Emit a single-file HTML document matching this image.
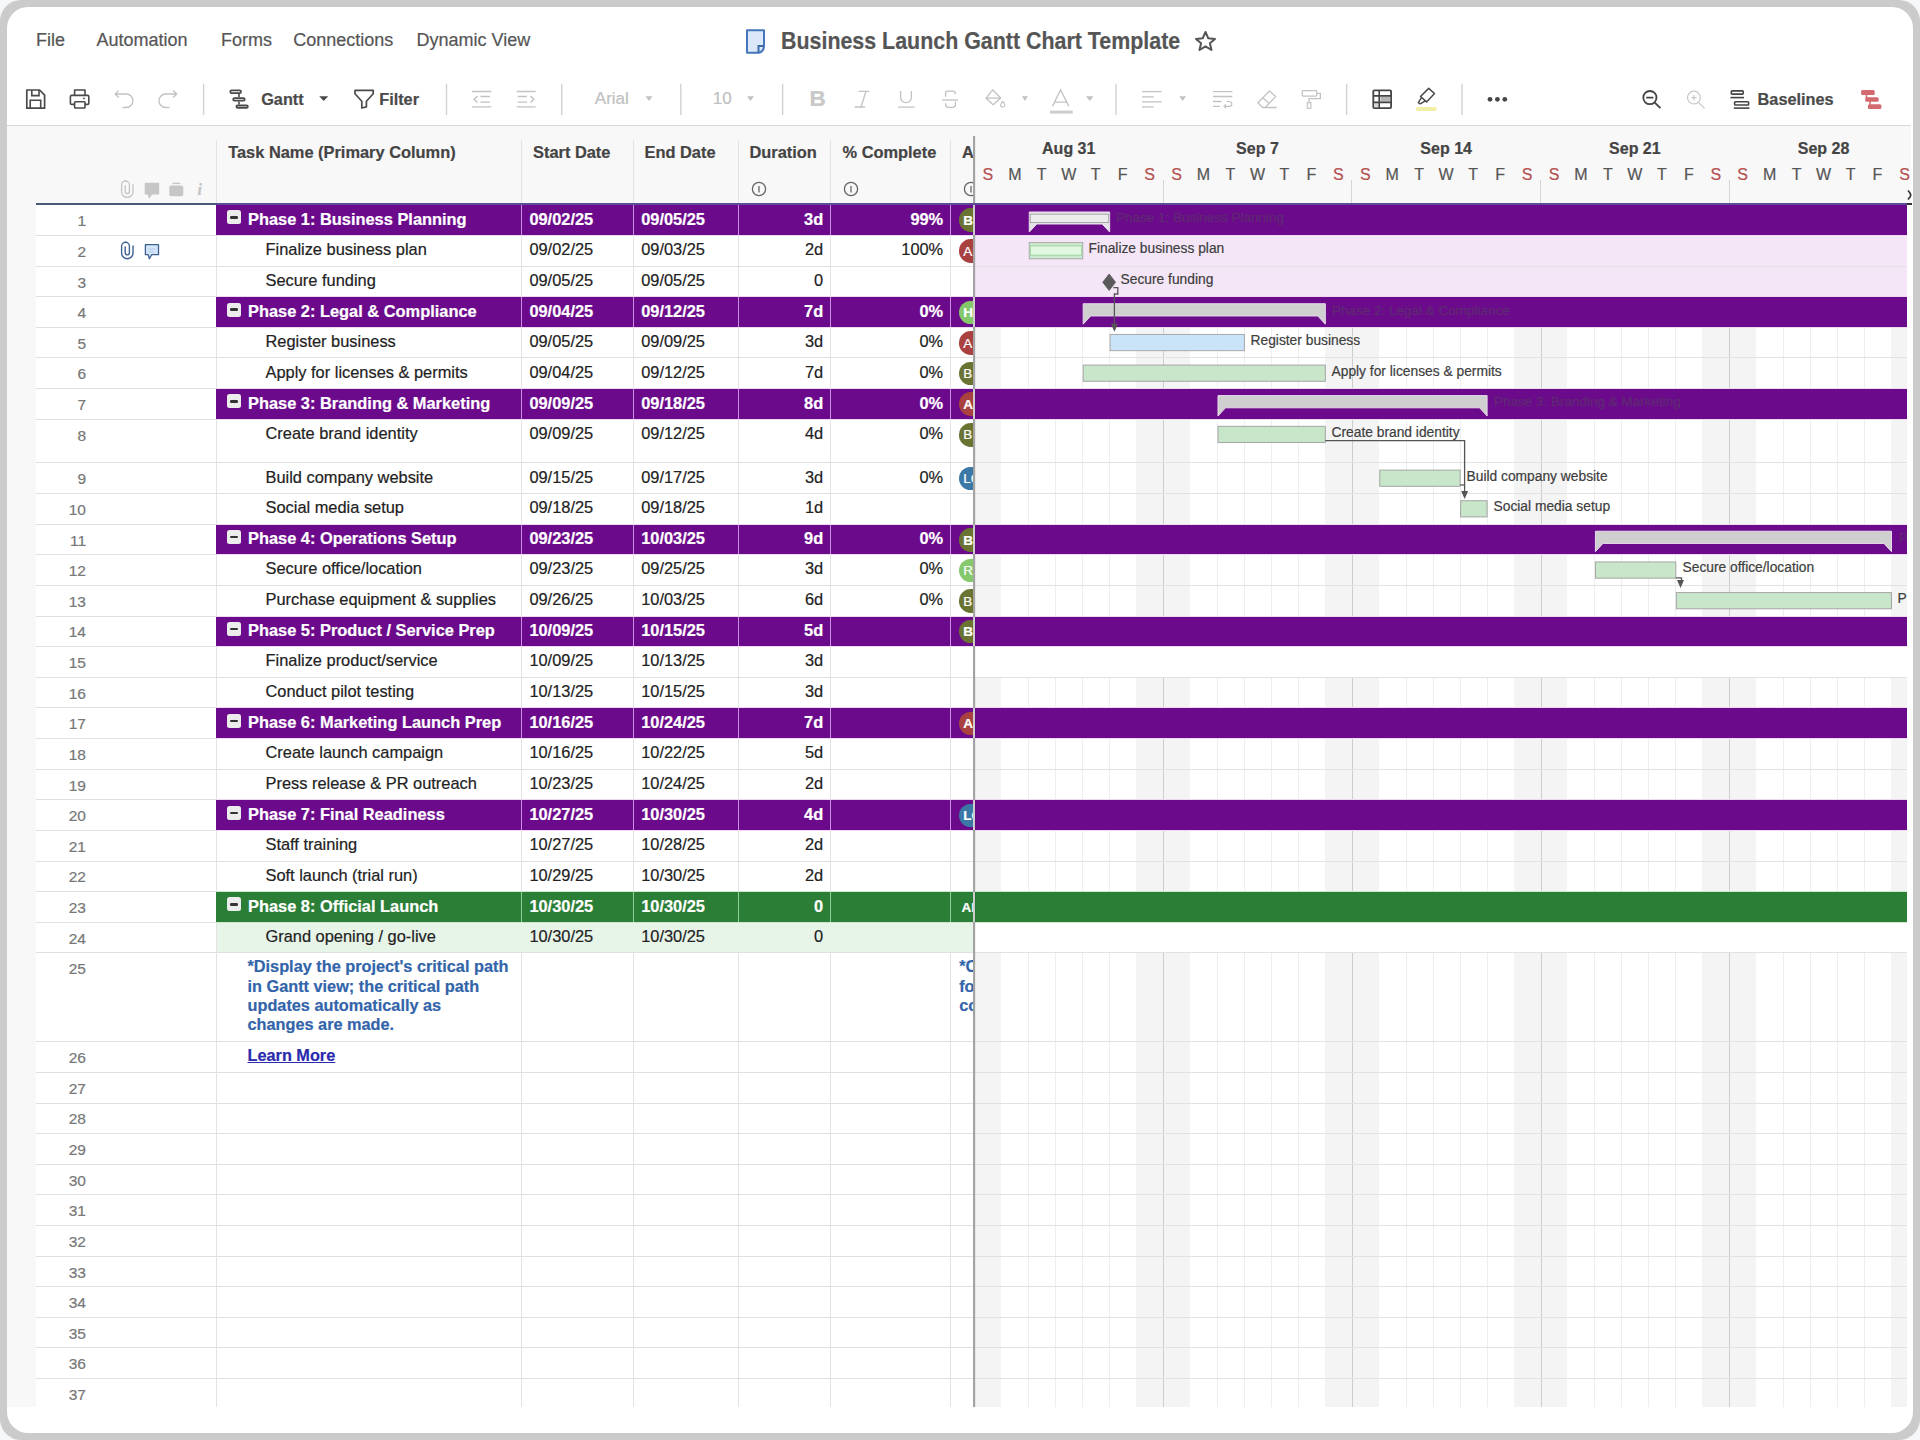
<!DOCTYPE html>
<html><head><meta charset="utf-8"><style>
.t{-webkit-text-stroke:0.2px currentColor}
html,body{margin:0;padding:0;width:1920px;height:1440px;overflow:hidden;background:#f6f7f9}
body div{position:absolute}
.t{white-space:nowrap;font-family:"Liberation Sans",sans-serif}
body{font-family:"Liberation Sans",sans-serif}
</style></head><body>
<div style="left:0;top:0;width:1920px;height:1440px;border-radius:21px;background:#cbcbcb"></div>
<div style="left:7px;top:7px;width:1906px;height:1426px;border-radius:21px;background:#fff"></div>
<div class="t" style="left:36.00px;top:30.76px;font-size:18px;line-height:18px;font-weight:400;color:#555;">File</div>
<div class="t" style="left:96.50px;top:30.76px;font-size:18px;line-height:18px;font-weight:400;color:#555;">Automation</div>
<div class="t" style="left:221.00px;top:30.76px;font-size:18px;line-height:18px;font-weight:400;color:#555;">Forms</div>
<div class="t" style="left:293.30px;top:30.76px;font-size:18px;line-height:18px;font-weight:400;color:#555;">Connections</div>
<div class="t" style="left:416.50px;top:30.76px;font-size:18px;line-height:18px;font-weight:400;color:#555;">Dynamic View</div>
<svg style="position:absolute;left:744.00px;top:28.00px;" width="24" height="27" viewBox="0 0 24 27"><path d="M3 2.3 H20 V17.5 Q20 23.8 14.5 24.8 H3 Z" fill="#dbe8fa" stroke="#4677bb" stroke-width="2" stroke-linejoin="round"/><path d="M19.8 18 H14.5 V24.5" fill="none" stroke="#3f6aa8" stroke-width="2"/></svg>
<div class="t" style="left:781.00px;top:29.69px;font-size:23.4px;line-height:23.4px;font-weight:700;color:#555;transform:scaleX(0.915);transform-origin:0 0">Business Launch Gantt Chart Template</div>
<svg style="position:absolute;left:1193.00px;top:29.00px;" width="25" height="25" viewBox="0 0 25 25"><path d="M12.5 3 L15.3 9.3 L22 9.9 L16.9 14.3 L18.5 21 L12.5 17.4 L6.5 21 L8.1 14.3 L3 9.9 L9.7 9.3 Z" fill="none" stroke="#555" stroke-width="2" stroke-linejoin="round"/></svg>
<svg style="position:absolute;left:0;top:0" width="1920" height="130"><path d="M26.8 90 H39.6 L44.6 95.2 V108.2 H26.8 Z" fill="none" stroke="#4a4a4a" stroke-width="1.7" stroke-linejoin="round"/><path d="M31.8 90 V95.6 H39 V90" fill="none" stroke="#4a4a4a" stroke-width="1.6"/><path d="M30.2 108.2 V100.2 H40.7 V108.2" fill="none" stroke="#4a4a4a" stroke-width="1.6"/><path d="M74.6 95 V90 H85 V95" fill="none" stroke="#4a4a4a" stroke-width="1.6" stroke-linejoin="round"/><rect x="70.4" y="95.4" width="18.4" height="9" rx="1.2" fill="none" stroke="#4a4a4a" stroke-width="1.6"/><rect x="74.6" y="101.8" width="10.4" height="6.2" rx="0.8" fill="#fff" stroke="#4a4a4a" stroke-width="1.6"/><circle cx="84" cy="98.4" r="0.9" fill="#4a4a4a"/><path d="M115.2 94 H126.2 A6.75 6.75 0 0 1 126.2 107.5 H122.5 M118.75 90.4 L115.2 94 L118.75 97.5" fill="none" stroke="#c2c2c2" stroke-width="1.3"/><path d="M176.7 94 H165.7 A6.75 6.75 0 0 0 165.7 107.5 H169.4 M173.15 90.4 L176.7 94 L173.15 97.5" fill="none" stroke="#c2c2c2" stroke-width="1.3"/><rect x="202.9" y="83.7" width="1.4" height="31.3" fill="#d2d2d2"/><rect x="445.8" y="83.7" width="1.4" height="31.3" fill="#d2d2d2"/><rect x="561.0" y="83.7" width="1.4" height="31.3" fill="#d2d2d2"/><rect x="680.0999999999999" y="83.7" width="1.4" height="31.3" fill="#d2d2d2"/><rect x="781.9" y="83.7" width="1.4" height="31.3" fill="#d2d2d2"/><rect x="1115.3" y="83.7" width="1.4" height="31.3" fill="#d2d2d2"/><rect x="1345.8999999999999" y="83.7" width="1.4" height="31.3" fill="#d2d2d2"/><rect x="1461.3" y="83.7" width="1.4" height="31.3" fill="#d2d2d2"/><rect x="230.3" y="90.30000000000001" width="10.7" height="2.7999999999999945" rx="1.3" fill="none" stroke="#4a4a4a" stroke-width="1.8"/><rect x="233.20000000000002" y="98.2" width="11.499999999999982" height="2.400000000000003" rx="1.3" fill="none" stroke="#4a4a4a" stroke-width="1.8"/><rect x="236.4" y="105.5" width="11.45" height="2.350000000000006" rx="1.3" fill="none" stroke="#4a4a4a" stroke-width="1.8"/><path d="M239 94 V97.3 M239 101.5 V104.6" stroke="#4a4a4a" stroke-width="1.6"/><path d="M319.2 96.3 H328.2 L323.7 101 Z" fill="#4a4a4a"/><path d="M355 90.3 H373.2 V93.8 L366.4 101.3 V106.9 L361.8 108 V101.3 L355 93.8 Z" fill="none" stroke="#4a4a4a" stroke-width="1.7" stroke-linejoin="round"/><path d="M472 91.5 H491.3 M480.4 96.5 H490 M480.4 102.1 H490 M472 106.9 H491.3" stroke="#c2c2c2" stroke-width="1.4"/><path d="M477.5 96 L474 99.3 L477.5 102.6" fill="none" stroke="#c2c2c2" stroke-width="1.4"/><path d="M516.7 91.5 H535.6 M517.7 96.5 H526.9 M517.7 102.1 H526.9 M516.7 106.9 H535.6" stroke="#c2c2c2" stroke-width="1.4"/><path d="M530.6 96 L533.8 99.3 L530.6 102.6" fill="none" stroke="#c2c2c2" stroke-width="1.4"/><path d="M645.5 96.3 H652.5 L649.0 101 Z" fill="#c2c2c2"/><path d="M747 96.3 H754 L750.5 101 Z" fill="#c2c2c2"/><path d="M858.8 91.3 H869.2 M854.6 107 H865 M866 91.3 L861 107" fill="none" stroke="#c2c2c2" stroke-width="1.3"/><path d="M900.6 91 V97.3 A5.4 5.4 0 0 0 911.4 97.3 V91 M898 107.2 H914.6" fill="none" stroke="#c2c2c2" stroke-width="1.3"/><path d="M955.2 94.3 V93.5 Q955.2 91.2 952.5 91.2 H948 Q945.5 91.2 945.5 93.8 V96.8 M945.6 103.3 V104.6 Q945.6 107.3 948.3 107.3 H952.8 Q955.5 107.3 955.5 104.6 V101.5" fill="none" stroke="#c2c2c2" stroke-width="1.3"/><path d="M942 100 H958" stroke="#c2c2c2" stroke-width="1.3"/><path d="M992.6 89.8 L1000.7 98 L993.2 104.8 L986 98.3 Z" fill="none" stroke="#c2c2c2" stroke-width="1.3" stroke-linejoin="round"/><path d="M986.5 98.1 H1000.3" stroke="#c2c2c2" stroke-width="1.3"/><path d="M1002.7 101.3 Q1000.6 104 1000.6 105 A2.1 2.1 0 0 0 1004.8 105 Q1004.8 104 1002.7 101.3 Z" fill="none" stroke="#c2c2c2" stroke-width="1.1"/><path d="M1021.9 96.3 H1028 L1024.95 101 Z" fill="#c2c2c2"/><path d="M1052.5 106.4 L1060.6 89.8 L1068.8 106.4 M1055 102.2 H1066.3" fill="none" stroke="#c2c2c2" stroke-width="1.3"/><rect x="1050" y="110.6" width="22.7" height="3" fill="#cdcdcd"/><path d="M1086 96.3 H1093.5 L1089.75 101 Z" fill="#c2c2c2"/><path d="M1142 91.6 H1161.6 M1142 96.8 H1153.8 M1142 101.8 H1161.6 M1142 106.8 H1153.8" stroke="#c2c2c2" stroke-width="1.3"/><path d="M1179.3 96.3 H1186 L1182.65 101 Z" fill="#c2c2c2"/><path d="M1213 91.6 H1232.4 M1213 96.5 H1232.4 M1213 101.5 H1221.5 M1213 106.3 H1220" stroke="#c2c2c2" stroke-width="1.3"/><path d="M1226.7 101.5 H1229.4 A2.4 2.4 0 0 1 1229.4 106.3 H1224.2 M1226 104.3 L1224 106.3 L1226 108.3" fill="none" stroke="#c2c2c2" stroke-width="1.2"/><path d="M1258 102.8 L1269.4 90.9 L1275.6 96.6 L1265.2 107.5 H1262.5 Z M1262.8 97.8 L1269.3 103.8 M1265.2 107.5 H1276.7" fill="none" stroke="#c2c2c2" stroke-width="1.3" stroke-linejoin="round"/><rect x="1302.3" y="90.7" width="14.4" height="5.4" rx="0.8" fill="none" stroke="#c2c2c2" stroke-width="1.3"/><path d="M1316.7 93.3 H1320.3 V98.7 H1309 V102.3" fill="none" stroke="#c2c2c2" stroke-width="1.3"/><rect x="1307.3" y="102.6" width="3.6" height="5.8" rx="0.5" fill="none" stroke="#c2c2c2" stroke-width="1.2"/><rect x="1373.3" y="90.3" width="17.8" height="17.8" rx="1" fill="none" stroke="#444" stroke-width="1.8"/><rect x="1380.4" y="96.6" width="9.8" height="5" fill="#b4b4b4"/><rect x="1374.3" y="103" width="4" height="4.2" fill="#d8d8d8"/><path d="M1373.3 95.9 H1391.1 M1373.3 102.4 H1391.1 M1379.2 90.3 V108.1" stroke="#444" stroke-width="1.6"/><path d="M1420.5 96.5 L1428.7 88.4 L1434.5 93.5 L1426.6 101.9 Z" fill="none" stroke="#4a4a4a" stroke-width="1.5" stroke-linejoin="round"/><path d="M1421.5 97.6 L1418.3 102.6 L1420.2 103.9 L1425.4 100.8" fill="none" stroke="#4a4a4a" stroke-width="1.4" stroke-linejoin="round"/><rect x="1415.8" y="107" width="21.1" height="3.9" rx="1.9" fill="#f4efa6"/><circle cx="1490" cy="99.3" r="2.4" fill="#454545"/><circle cx="1497.4" cy="99.3" r="2.4" fill="#454545"/><circle cx="1504.8" cy="99.3" r="2.4" fill="#454545"/><circle cx="1649.9" cy="97.6" r="6.6" fill="none" stroke="#444" stroke-width="1.8"/><path d="M1654.8 102.6 L1660.4 108.2 M1646.2 97.6 H1653.4" stroke="#444" stroke-width="1.8"/><circle cx="1693.9" cy="97.6" r="6.4" fill="none" stroke="#c6c6c6" stroke-width="1.2"/><path d="M1698.5 102.4 L1704.6 108.4 M1691.3 97.6 H1696.5 M1693.9 95 V100.2" stroke="#c6c6c6" stroke-width="1.2"/><rect x="1731.3" y="90.9" width="11.9" height="3.2" rx="0.8" fill="none" stroke="#444" stroke-width="1.6"/><path d="M1730.5 97.6 H1744" stroke="#444" stroke-width="1.6"/><rect x="1734.6" y="101.8" width="14" height="3.2" rx="0.8" fill="none" stroke="#444" stroke-width="1.6"/><path d="M1733.8 108.1 H1749.4" stroke="#444" stroke-width="1.6"/><rect x="1861.1" y="90.1" width="13.6" height="4.8" rx="1.5" fill="#d26a70"/><rect x="1865.2" y="97.3" width="13.5" height="4.5" rx="1.5" fill="#d26a70"/><rect x="1867.9" y="104.3" width="13.5" height="4.7" rx="1.5" fill="#d26a70"/><path d="M1866.5 94 V98 M1870 101 V105" stroke="#d26a70" stroke-width="1.5"/></svg>
<div class="t" style="left:261.20px;top:90.90px;font-size:16.3px;line-height:16.3px;font-weight:700;color:#4a4a4a;">Gantt</div>
<div class="t" style="left:379.20px;top:90.90px;font-size:16.3px;line-height:16.3px;font-weight:700;color:#4a4a4a;">Filter</div>
<div class="t" style="left:594.80px;top:90.11px;font-size:17px;line-height:17px;font-weight:400;color:#c0c0c0;">Arial</div>
<div class="t" style="left:712.80px;top:90.11px;font-size:17px;line-height:17px;font-weight:400;color:#c0c0c0;">10</div>
<div class="t" style="left:809.50px;top:88.35px;font-size:22.5px;line-height:22.5px;font-weight:700;color:#c8c8c8;">B</div>
<div class="t" style="left:1757.60px;top:90.70px;font-size:16.3px;line-height:16.3px;font-weight:700;color:#4a4a4a;">Baselines</div>
<div style="left:7.00px;top:124.50px;width:1904.00px;height:1.60px;background:#d9d9d9"></div>
<div style="left:7.00px;top:126.00px;width:1904.00px;height:77.00px;background:#f9f8f8"></div>
<div style="left:7.00px;top:126.00px;width:29.00px;height:1281.00px;background:#f9f8f8"></div>
<svg style="position:absolute;left:0;top:0" width="300" height="270"><path transform="translate(0,-61.3)" d="M125.2 246.5 V252.8 A2.1 2.1 0 0 0 129.4 252.8 V246.2 A3.9 3.9 0 0 0 121.6 246.2 V253 A5.7 5.7 0 0 0 133 253 V245.5" fill="none" stroke="#c4c4c4" stroke-width="1.3"/><path d="M145.3 183.4 H158.6 V194 H151.6 L149.4 197.8 L148.1 194 H145.3 Z" fill="#c6c6c6" stroke="#c6c6c6" stroke-width="1.2" stroke-linejoin="round"/><rect x="169.3" y="185.5" width="14" height="10.8" rx="1.8" fill="#c6c6c6"/><path d="M172.5 183.4 H180.2" stroke="#c6c6c6" stroke-width="1.4"/></svg>
<div class="t" style="left:197.50px;top:182.46px;font-size:16px;line-height:16px;font-weight:700;color:#c4c4c4;font-style:italic;font-family:'Liberation Serif',serif">i</div>
<div style="left:215.50px;top:140.00px;width:1.00px;height:63.00px;background:#e3e3e3"></div>
<div style="left:520.90px;top:140.00px;width:1.00px;height:63.00px;background:#e3e3e3"></div>
<div style="left:632.80px;top:140.00px;width:1.00px;height:63.00px;background:#e3e3e3"></div>
<div style="left:738.30px;top:140.00px;width:1.00px;height:63.00px;background:#e3e3e3"></div>
<div style="left:829.70px;top:140.00px;width:1.00px;height:63.00px;background:#e3e3e3"></div>
<div style="left:950.00px;top:140.00px;width:1.00px;height:63.00px;background:#e3e3e3"></div>
<div class="t" style="left:228.20px;top:144.12px;font-size:16.4px;line-height:16.4px;font-weight:700;color:#444;">Task Name (Primary Column)</div>
<div class="t" style="left:533.00px;top:144.12px;font-size:16.4px;line-height:16.4px;font-weight:700;color:#444;">Start Date</div>
<div class="t" style="left:644.50px;top:144.12px;font-size:16.4px;line-height:16.4px;font-weight:700;color:#444;">End Date</div>
<div class="t" style="left:749.50px;top:144.12px;font-size:16.4px;line-height:16.4px;font-weight:700;color:#444;">Duration</div>
<div class="t" style="left:842.50px;top:144.12px;font-size:16.4px;line-height:16.4px;font-weight:700;color:#444;">% Complete</div>
<div class="t" style="left:962.00px;top:144.12px;font-size:16.4px;line-height:16.4px;font-weight:700;color:#444;">A</div>
<div style="left:740px;top:170px;width:233px;height:30px;overflow:hidden">
<svg style="position:absolute;left:11.00px;top:11.20px;" width="16" height="16" viewBox="0 0 16 16"><circle cx="8" cy="8" r="6.6" fill="none" stroke="#666" stroke-width="1.3"/><path d="M8 5 V11.5" stroke="#666" stroke-width="1.3"/></svg>
<svg style="position:absolute;left:103.00px;top:11.20px;" width="16" height="16" viewBox="0 0 16 16"><circle cx="8" cy="8" r="6.6" fill="none" stroke="#666" stroke-width="1.3"/><path d="M8 5 V11.5" stroke="#666" stroke-width="1.3"/></svg>
<svg style="position:absolute;left:223.00px;top:11.20px;" width="16" height="16" viewBox="0 0 16 16"><circle cx="8" cy="8" r="6.6" fill="none" stroke="#666" stroke-width="1.3"/><path d="M8 5 V11.5" stroke="#666" stroke-width="1.3"/></svg>
</div>
<div style="left:974.0px;top:126px;width:937.0px;height:77px;overflow:hidden">
<div class="t" style="left:-305.29px;width:800px;text-align:center;top:15.36px;font-size:16px;line-height:16px;font-weight:700;color:#444;">Aug 31</div>
<div class="t" style="left:-116.57px;width:800px;text-align:center;top:15.36px;font-size:16px;line-height:16px;font-weight:700;color:#444;">Sep 7</div>
<div class="t" style="left:72.15px;width:800px;text-align:center;top:15.36px;font-size:16px;line-height:16px;font-weight:700;color:#444;">Sep 14</div>
<div class="t" style="left:260.87px;width:800px;text-align:center;top:15.36px;font-size:16px;line-height:16px;font-weight:700;color:#444;">Sep 21</div>
<div class="t" style="left:449.59px;width:800px;text-align:center;top:15.36px;font-size:16px;line-height:16px;font-weight:700;color:#444;">Sep 28</div>
<div class="t" style="left:-386.17px;width:800px;text-align:center;top:40.66px;font-size:16px;line-height:16px;font-weight:400;color:#b45050;">S</div>
<div class="t" style="left:-359.21px;width:800px;text-align:center;top:40.66px;font-size:16px;line-height:16px;font-weight:400;color:#555;">M</div>
<div class="t" style="left:-332.25px;width:800px;text-align:center;top:40.66px;font-size:16px;line-height:16px;font-weight:400;color:#555;">T</div>
<div class="t" style="left:-305.29px;width:800px;text-align:center;top:40.66px;font-size:16px;line-height:16px;font-weight:400;color:#555;">W</div>
<div class="t" style="left:-278.33px;width:800px;text-align:center;top:40.66px;font-size:16px;line-height:16px;font-weight:400;color:#555;">T</div>
<div class="t" style="left:-251.37px;width:800px;text-align:center;top:40.66px;font-size:16px;line-height:16px;font-weight:400;color:#555;">F</div>
<div class="t" style="left:-224.41px;width:800px;text-align:center;top:40.66px;font-size:16px;line-height:16px;font-weight:400;color:#b45050;">S</div>
<div class="t" style="left:-197.45px;width:800px;text-align:center;top:40.66px;font-size:16px;line-height:16px;font-weight:400;color:#b45050;">S</div>
<div class="t" style="left:-170.49px;width:800px;text-align:center;top:40.66px;font-size:16px;line-height:16px;font-weight:400;color:#555;">M</div>
<div class="t" style="left:-143.53px;width:800px;text-align:center;top:40.66px;font-size:16px;line-height:16px;font-weight:400;color:#555;">T</div>
<div class="t" style="left:-116.57px;width:800px;text-align:center;top:40.66px;font-size:16px;line-height:16px;font-weight:400;color:#555;">W</div>
<div class="t" style="left:-89.61px;width:800px;text-align:center;top:40.66px;font-size:16px;line-height:16px;font-weight:400;color:#555;">T</div>
<div class="t" style="left:-62.65px;width:800px;text-align:center;top:40.66px;font-size:16px;line-height:16px;font-weight:400;color:#555;">F</div>
<div class="t" style="left:-35.69px;width:800px;text-align:center;top:40.66px;font-size:16px;line-height:16px;font-weight:400;color:#b45050;">S</div>
<div class="t" style="left:-8.73px;width:800px;text-align:center;top:40.66px;font-size:16px;line-height:16px;font-weight:400;color:#b45050;">S</div>
<div class="t" style="left:18.23px;width:800px;text-align:center;top:40.66px;font-size:16px;line-height:16px;font-weight:400;color:#555;">M</div>
<div class="t" style="left:45.19px;width:800px;text-align:center;top:40.66px;font-size:16px;line-height:16px;font-weight:400;color:#555;">T</div>
<div class="t" style="left:72.15px;width:800px;text-align:center;top:40.66px;font-size:16px;line-height:16px;font-weight:400;color:#555;">W</div>
<div class="t" style="left:99.11px;width:800px;text-align:center;top:40.66px;font-size:16px;line-height:16px;font-weight:400;color:#555;">T</div>
<div class="t" style="left:126.07px;width:800px;text-align:center;top:40.66px;font-size:16px;line-height:16px;font-weight:400;color:#555;">F</div>
<div class="t" style="left:153.03px;width:800px;text-align:center;top:40.66px;font-size:16px;line-height:16px;font-weight:400;color:#b45050;">S</div>
<div class="t" style="left:179.99px;width:800px;text-align:center;top:40.66px;font-size:16px;line-height:16px;font-weight:400;color:#b45050;">S</div>
<div class="t" style="left:206.95px;width:800px;text-align:center;top:40.66px;font-size:16px;line-height:16px;font-weight:400;color:#555;">M</div>
<div class="t" style="left:233.91px;width:800px;text-align:center;top:40.66px;font-size:16px;line-height:16px;font-weight:400;color:#555;">T</div>
<div class="t" style="left:260.87px;width:800px;text-align:center;top:40.66px;font-size:16px;line-height:16px;font-weight:400;color:#555;">W</div>
<div class="t" style="left:287.83px;width:800px;text-align:center;top:40.66px;font-size:16px;line-height:16px;font-weight:400;color:#555;">T</div>
<div class="t" style="left:314.79px;width:800px;text-align:center;top:40.66px;font-size:16px;line-height:16px;font-weight:400;color:#555;">F</div>
<div class="t" style="left:341.75px;width:800px;text-align:center;top:40.66px;font-size:16px;line-height:16px;font-weight:400;color:#b45050;">S</div>
<div class="t" style="left:368.71px;width:800px;text-align:center;top:40.66px;font-size:16px;line-height:16px;font-weight:400;color:#b45050;">S</div>
<div class="t" style="left:395.67px;width:800px;text-align:center;top:40.66px;font-size:16px;line-height:16px;font-weight:400;color:#555;">M</div>
<div class="t" style="left:422.63px;width:800px;text-align:center;top:40.66px;font-size:16px;line-height:16px;font-weight:400;color:#555;">T</div>
<div class="t" style="left:449.59px;width:800px;text-align:center;top:40.66px;font-size:16px;line-height:16px;font-weight:400;color:#555;">W</div>
<div class="t" style="left:476.55px;width:800px;text-align:center;top:40.66px;font-size:16px;line-height:16px;font-weight:400;color:#555;">T</div>
<div class="t" style="left:503.51px;width:800px;text-align:center;top:40.66px;font-size:16px;line-height:16px;font-weight:400;color:#555;">F</div>
<div class="t" style="left:530.47px;width:800px;text-align:center;top:40.66px;font-size:16px;line-height:16px;font-weight:400;color:#b45050;">S</div>
<div style="left:189.00px;top:54.00px;width:1.00px;height:23.00px;background:#d6d6d6"></div>
<div style="left:377.00px;top:54.00px;width:1.00px;height:23.00px;background:#d6d6d6"></div>
<div style="left:566.00px;top:54.00px;width:1.00px;height:23.00px;background:#d6d6d6"></div>
<div style="left:755.00px;top:54.00px;width:1.00px;height:23.00px;background:#d6d6d6"></div>
</div>
<div style="left:36.00px;top:205.00px;width:936.50px;height:1202.00px;background:#fff"></div>
<div style="left:974.0px;top:205px;width:933.0px;height:1202px;overflow:hidden;background:#fff">
<div style="left:-27.00px;top:0.00px;width:54.00px;height:1202.00px;background:#f4f4f4"></div>
<div style="left:162.00px;top:0.00px;width:54.00px;height:1202.00px;background:#f4f4f4"></div>
<div style="left:351.00px;top:0.00px;width:54.00px;height:1202.00px;background:#f4f4f4"></div>
<div style="left:540.00px;top:0.00px;width:53.00px;height:1202.00px;background:#f4f4f4"></div>
<div style="left:728.00px;top:0.00px;width:54.00px;height:1202.00px;background:#f4f4f4"></div>
<div style="left:917.00px;top:0.00px;width:54.00px;height:1202.00px;background:#f4f4f4"></div>
<div style="left:53.50px;top:0.00px;width:1.00px;height:1202.00px;background:#eeeeee"></div>
<div style="left:80.50px;top:0.00px;width:1.00px;height:1202.00px;background:#eeeeee"></div>
<div style="left:107.50px;top:0.00px;width:1.00px;height:1202.00px;background:#eeeeee"></div>
<div style="left:134.50px;top:0.00px;width:1.00px;height:1202.00px;background:#eeeeee"></div>
<div style="left:242.50px;top:0.00px;width:1.00px;height:1202.00px;background:#eeeeee"></div>
<div style="left:269.50px;top:0.00px;width:1.00px;height:1202.00px;background:#eeeeee"></div>
<div style="left:296.50px;top:0.00px;width:1.00px;height:1202.00px;background:#eeeeee"></div>
<div style="left:323.50px;top:0.00px;width:1.00px;height:1202.00px;background:#eeeeee"></div>
<div style="left:431.50px;top:0.00px;width:1.00px;height:1202.00px;background:#eeeeee"></div>
<div style="left:458.50px;top:0.00px;width:1.00px;height:1202.00px;background:#eeeeee"></div>
<div style="left:485.50px;top:0.00px;width:1.00px;height:1202.00px;background:#eeeeee"></div>
<div style="left:512.50px;top:0.00px;width:1.00px;height:1202.00px;background:#eeeeee"></div>
<div style="left:619.50px;top:0.00px;width:1.00px;height:1202.00px;background:#eeeeee"></div>
<div style="left:646.50px;top:0.00px;width:1.00px;height:1202.00px;background:#eeeeee"></div>
<div style="left:673.50px;top:0.00px;width:1.00px;height:1202.00px;background:#eeeeee"></div>
<div style="left:700.50px;top:0.00px;width:1.00px;height:1202.00px;background:#eeeeee"></div>
<div style="left:808.50px;top:0.00px;width:1.00px;height:1202.00px;background:#eeeeee"></div>
<div style="left:835.50px;top:0.00px;width:1.00px;height:1202.00px;background:#eeeeee"></div>
<div style="left:862.50px;top:0.00px;width:1.00px;height:1202.00px;background:#eeeeee"></div>
<div style="left:889.50px;top:0.00px;width:1.00px;height:1202.00px;background:#eeeeee"></div>
<div style="left:-0.50px;top:0.00px;width:1.00px;height:1202.00px;background:#cdcdcd"></div>
<div style="left:188.50px;top:0.00px;width:1.00px;height:1202.00px;background:#cdcdcd"></div>
<div style="left:377.50px;top:0.00px;width:1.00px;height:1202.00px;background:#cdcdcd"></div>
<div style="left:566.50px;top:0.00px;width:1.00px;height:1202.00px;background:#cdcdcd"></div>
<div style="left:754.50px;top:0.00px;width:1.00px;height:1202.00px;background:#cdcdcd"></div>
<div style="left:943.50px;top:0.00px;width:1.00px;height:1202.00px;background:#cdcdcd"></div>
</div>
<div style="left:215.50px;top:205.00px;width:1.00px;height:1202.00px;background:#e3e3e3"></div>
<div style="left:520.90px;top:205.00px;width:1.00px;height:1202.00px;background:#e3e3e3"></div>
<div style="left:632.80px;top:205.00px;width:1.00px;height:1202.00px;background:#e3e3e3"></div>
<div style="left:738.30px;top:205.00px;width:1.00px;height:1202.00px;background:#e3e3e3"></div>
<div style="left:829.70px;top:205.00px;width:1.00px;height:1202.00px;background:#e3e3e3"></div>
<div style="left:950.00px;top:205.00px;width:1.00px;height:1202.00px;background:#e3e3e3"></div>
<div style="left:36.00px;top:235.00px;width:936.50px;height:1.00px;background:#e0e0e0"></div>
<div style="left:974.00px;top:235.00px;width:933.00px;height:1.00px;background:#e2e2e2"></div>
<div style="left:36.00px;top:266.00px;width:936.50px;height:1.00px;background:#e0e0e0"></div>
<div style="left:974.00px;top:266.00px;width:933.00px;height:1.00px;background:#e2e2e2"></div>
<div style="left:36.00px;top:296.00px;width:936.50px;height:1.00px;background:#e0e0e0"></div>
<div style="left:974.00px;top:296.00px;width:933.00px;height:1.00px;background:#e2e2e2"></div>
<div style="left:36.00px;top:327.00px;width:936.50px;height:1.00px;background:#e0e0e0"></div>
<div style="left:974.00px;top:327.00px;width:933.00px;height:1.00px;background:#e2e2e2"></div>
<div style="left:36.00px;top:357.00px;width:936.50px;height:1.00px;background:#e0e0e0"></div>
<div style="left:974.00px;top:357.00px;width:933.00px;height:1.00px;background:#e2e2e2"></div>
<div style="left:36.00px;top:388.00px;width:936.50px;height:1.00px;background:#e0e0e0"></div>
<div style="left:974.00px;top:388.00px;width:933.00px;height:1.00px;background:#e2e2e2"></div>
<div style="left:36.00px;top:419.00px;width:936.50px;height:1.00px;background:#e0e0e0"></div>
<div style="left:974.00px;top:419.00px;width:933.00px;height:1.00px;background:#e2e2e2"></div>
<div style="left:36.00px;top:462.00px;width:936.50px;height:1.00px;background:#e0e0e0"></div>
<div style="left:974.00px;top:462.00px;width:933.00px;height:1.00px;background:#e2e2e2"></div>
<div style="left:36.00px;top:493.00px;width:936.50px;height:1.00px;background:#e0e0e0"></div>
<div style="left:974.00px;top:493.00px;width:933.00px;height:1.00px;background:#e2e2e2"></div>
<div style="left:36.00px;top:524.00px;width:936.50px;height:1.00px;background:#e0e0e0"></div>
<div style="left:974.00px;top:524.00px;width:933.00px;height:1.00px;background:#e2e2e2"></div>
<div style="left:36.00px;top:554.00px;width:936.50px;height:1.00px;background:#e0e0e0"></div>
<div style="left:974.00px;top:554.00px;width:933.00px;height:1.00px;background:#e2e2e2"></div>
<div style="left:36.00px;top:585.00px;width:936.50px;height:1.00px;background:#e0e0e0"></div>
<div style="left:974.00px;top:585.00px;width:933.00px;height:1.00px;background:#e2e2e2"></div>
<div style="left:36.00px;top:616.00px;width:936.50px;height:1.00px;background:#e0e0e0"></div>
<div style="left:974.00px;top:616.00px;width:933.00px;height:1.00px;background:#e2e2e2"></div>
<div style="left:36.00px;top:646.00px;width:936.50px;height:1.00px;background:#e0e0e0"></div>
<div style="left:974.00px;top:646.00px;width:933.00px;height:1.00px;background:#e2e2e2"></div>
<div style="left:36.00px;top:677.00px;width:936.50px;height:1.00px;background:#e0e0e0"></div>
<div style="left:974.00px;top:677.00px;width:933.00px;height:1.00px;background:#e2e2e2"></div>
<div style="left:36.00px;top:707.00px;width:936.50px;height:1.00px;background:#e0e0e0"></div>
<div style="left:974.00px;top:707.00px;width:933.00px;height:1.00px;background:#e2e2e2"></div>
<div style="left:36.00px;top:738.00px;width:936.50px;height:1.00px;background:#e0e0e0"></div>
<div style="left:974.00px;top:738.00px;width:933.00px;height:1.00px;background:#e2e2e2"></div>
<div style="left:36.00px;top:769.00px;width:936.50px;height:1.00px;background:#e0e0e0"></div>
<div style="left:974.00px;top:769.00px;width:933.00px;height:1.00px;background:#e2e2e2"></div>
<div style="left:36.00px;top:799.00px;width:936.50px;height:1.00px;background:#e0e0e0"></div>
<div style="left:974.00px;top:799.00px;width:933.00px;height:1.00px;background:#e2e2e2"></div>
<div style="left:36.00px;top:830.00px;width:936.50px;height:1.00px;background:#e0e0e0"></div>
<div style="left:974.00px;top:830.00px;width:933.00px;height:1.00px;background:#e2e2e2"></div>
<div style="left:36.00px;top:861.00px;width:936.50px;height:1.00px;background:#e0e0e0"></div>
<div style="left:974.00px;top:861.00px;width:933.00px;height:1.00px;background:#e2e2e2"></div>
<div style="left:36.00px;top:891.00px;width:936.50px;height:1.00px;background:#e0e0e0"></div>
<div style="left:974.00px;top:891.00px;width:933.00px;height:1.00px;background:#e2e2e2"></div>
<div style="left:36.00px;top:922.00px;width:936.50px;height:1.00px;background:#e0e0e0"></div>
<div style="left:974.00px;top:922.00px;width:933.00px;height:1.00px;background:#e2e2e2"></div>
<div style="left:36.00px;top:952.00px;width:936.50px;height:1.00px;background:#e0e0e0"></div>
<div style="left:974.00px;top:952.00px;width:933.00px;height:1.00px;background:#e2e2e2"></div>
<div style="left:36.00px;top:1041.00px;width:936.50px;height:1.00px;background:#e0e0e0"></div>
<div style="left:974.00px;top:1041.00px;width:933.00px;height:1.00px;background:#e2e2e2"></div>
<div style="left:36.00px;top:1072.00px;width:936.50px;height:1.00px;background:#e0e0e0"></div>
<div style="left:974.00px;top:1072.00px;width:933.00px;height:1.00px;background:#e2e2e2"></div>
<div style="left:36.00px;top:1103.00px;width:936.50px;height:1.00px;background:#e0e0e0"></div>
<div style="left:974.00px;top:1103.00px;width:933.00px;height:1.00px;background:#e2e2e2"></div>
<div style="left:36.00px;top:1133.00px;width:936.50px;height:1.00px;background:#e0e0e0"></div>
<div style="left:974.00px;top:1133.00px;width:933.00px;height:1.00px;background:#e2e2e2"></div>
<div style="left:36.00px;top:1164.00px;width:936.50px;height:1.00px;background:#e0e0e0"></div>
<div style="left:974.00px;top:1164.00px;width:933.00px;height:1.00px;background:#e2e2e2"></div>
<div style="left:36.00px;top:1194.00px;width:936.50px;height:1.00px;background:#e0e0e0"></div>
<div style="left:974.00px;top:1194.00px;width:933.00px;height:1.00px;background:#e2e2e2"></div>
<div style="left:36.00px;top:1225.00px;width:936.50px;height:1.00px;background:#e0e0e0"></div>
<div style="left:974.00px;top:1225.00px;width:933.00px;height:1.00px;background:#e2e2e2"></div>
<div style="left:36.00px;top:1256.00px;width:936.50px;height:1.00px;background:#e0e0e0"></div>
<div style="left:974.00px;top:1256.00px;width:933.00px;height:1.00px;background:#e2e2e2"></div>
<div style="left:36.00px;top:1286.00px;width:936.50px;height:1.00px;background:#e0e0e0"></div>
<div style="left:974.00px;top:1286.00px;width:933.00px;height:1.00px;background:#e2e2e2"></div>
<div style="left:36.00px;top:1317.00px;width:936.50px;height:1.00px;background:#e0e0e0"></div>
<div style="left:974.00px;top:1317.00px;width:933.00px;height:1.00px;background:#e2e2e2"></div>
<div style="left:36.00px;top:1347.00px;width:936.50px;height:1.00px;background:#e0e0e0"></div>
<div style="left:974.00px;top:1347.00px;width:933.00px;height:1.00px;background:#e2e2e2"></div>
<div style="left:36.00px;top:1378.00px;width:936.50px;height:1.00px;background:#e0e0e0"></div>
<div style="left:974.00px;top:1378.00px;width:933.00px;height:1.00px;background:#e2e2e2"></div>
<div style="left:216.00px;top:205.00px;width:1691.00px;height:30.00px;background:#6b0b8b"></div>
<div style="left:520.90px;top:205.00px;width:1.00px;height:30.00px;background:#c98fe0"></div>
<div style="left:632.80px;top:205.00px;width:1.00px;height:30.00px;background:#c98fe0"></div>
<div style="left:738.30px;top:205.00px;width:1.00px;height:30.00px;background:#c98fe0"></div>
<div style="left:829.70px;top:205.00px;width:1.00px;height:30.00px;background:#c98fe0"></div>
<div style="left:950.00px;top:205.00px;width:1.00px;height:30.00px;background:#c98fe0"></div>
<div style="left:216.00px;top:235.00px;width:1691.00px;height:1.00px;background:#eed8f4"></div>
<div class="t" style="left:-714.00px;width:800px;text-align:right;top:212.88px;font-size:15.5px;line-height:15.5px;font-weight:400;color:#777;">1</div>
<div style="left:226.70px;top:210.30px;width:14.20px;height:14.00px;background:#ececec;border-radius:2.5px"></div>
<div style="left:229.90px;top:216.20px;width:7.80px;height:2.50px;background:#333;border-radius:1.2px"></div>
<div class="t" style="left:248.00px;top:210.62px;font-size:16.4px;line-height:16.4px;font-weight:700;color:#fff;">Phase 1: Business Planning</div>
<div class="t" style="left:529.40px;top:210.62px;font-size:16.4px;line-height:16.4px;font-weight:700;color:#fff;">09/02/25</div>
<div class="t" style="left:641.20px;top:210.62px;font-size:16.4px;line-height:16.4px;font-weight:700;color:#fff;">09/05/25</div>
<div class="t" style="left:23.20px;width:800px;text-align:right;top:210.62px;font-size:16.4px;line-height:16.4px;font-weight:700;color:#fff;">3d</div>
<div class="t" style="left:143.20px;width:800px;text-align:right;top:210.62px;font-size:16.4px;line-height:16.4px;font-weight:700;color:#fff;">99%</div>
<div style="left:951px;top:205.0px;width:22px;height:30.0px;overflow:hidden"><div style="left:8px;top:3.3px;width:23.6px;height:23.6px;border-radius:50%;background:#6b7332"></div><div class="t" style="left:12.200000000000045px;top:8.77225px;font-size:13.5px;line-height:13.5px;font-weight:700;color:#fff">B</div></div>
<div style="left:974.00px;top:236.00px;width:933.00px;height:30.00px;background:#f5e6f7"></div>
<div class="t" style="left:-714.00px;width:800px;text-align:right;top:243.88px;font-size:15.5px;line-height:15.5px;font-weight:400;color:#777;">2</div>
<div class="t" style="left:265.50px;top:241.12px;font-size:16.4px;line-height:16.4px;font-weight:400;color:#222;">Finalize business plan</div>
<div class="t" style="left:529.40px;top:241.12px;font-size:16.4px;line-height:16.4px;font-weight:400;color:#222;">09/02/25</div>
<div class="t" style="left:641.20px;top:241.12px;font-size:16.4px;line-height:16.4px;font-weight:400;color:#222;">09/03/25</div>
<div class="t" style="left:23.20px;width:800px;text-align:right;top:241.12px;font-size:16.4px;line-height:16.4px;font-weight:400;color:#222;">2d</div>
<div class="t" style="left:143.20px;width:800px;text-align:right;top:241.12px;font-size:16.4px;line-height:16.4px;font-weight:400;color:#222;">100%</div>
<div style="left:951px;top:236.0px;width:22px;height:29.620000000000005px;overflow:hidden"><div style="left:8px;top:3.3px;width:23.6px;height:23.6px;border-radius:50%;background:#a8413f"></div><div class="t" style="left:12.200000000000045px;top:8.77225px;font-size:13.5px;line-height:13.5px;font-weight:400;color:#fff">AI</div></div>
<div style="left:974.00px;top:267.00px;width:933.00px;height:29.00px;background:#f5e6f7"></div>
<div class="t" style="left:-714.00px;width:800px;text-align:right;top:274.50px;font-size:15.5px;line-height:15.5px;font-weight:400;color:#777;">3</div>
<div class="t" style="left:265.50px;top:271.74px;font-size:16.4px;line-height:16.4px;font-weight:400;color:#222;">Secure funding</div>
<div class="t" style="left:529.40px;top:271.74px;font-size:16.4px;line-height:16.4px;font-weight:400;color:#222;">09/05/25</div>
<div class="t" style="left:641.20px;top:271.74px;font-size:16.4px;line-height:16.4px;font-weight:400;color:#222;">09/05/25</div>
<div class="t" style="left:23.20px;width:800px;text-align:right;top:271.74px;font-size:16.4px;line-height:16.4px;font-weight:400;color:#222;">0</div>
<div style="left:216.00px;top:297.00px;width:1691.00px;height:30.00px;background:#6b0b8b"></div>
<div style="left:520.90px;top:297.00px;width:1.00px;height:30.00px;background:#c98fe0"></div>
<div style="left:632.80px;top:297.00px;width:1.00px;height:30.00px;background:#c98fe0"></div>
<div style="left:738.30px;top:297.00px;width:1.00px;height:30.00px;background:#c98fe0"></div>
<div style="left:829.70px;top:297.00px;width:1.00px;height:30.00px;background:#c98fe0"></div>
<div style="left:950.00px;top:297.00px;width:1.00px;height:30.00px;background:#c98fe0"></div>
<div style="left:216.00px;top:296.00px;width:1691.00px;height:1.00px;background:#eed8f4"></div>
<div style="left:216.00px;top:327.00px;width:1691.00px;height:1.00px;background:#eed8f4"></div>
<div class="t" style="left:-714.00px;width:800px;text-align:right;top:305.12px;font-size:15.5px;line-height:15.5px;font-weight:400;color:#777;">4</div>
<div style="left:226.70px;top:302.54px;width:14.20px;height:14.00px;background:#ececec;border-radius:2.5px"></div>
<div style="left:229.90px;top:308.44px;width:7.80px;height:2.50px;background:#333;border-radius:1.2px"></div>
<div class="t" style="left:248.00px;top:302.86px;font-size:16.4px;line-height:16.4px;font-weight:700;color:#fff;">Phase 2: Legal &amp; Compliance</div>
<div class="t" style="left:529.40px;top:302.86px;font-size:16.4px;line-height:16.4px;font-weight:700;color:#fff;">09/04/25</div>
<div class="t" style="left:641.20px;top:302.86px;font-size:16.4px;line-height:16.4px;font-weight:700;color:#fff;">09/12/25</div>
<div class="t" style="left:23.20px;width:800px;text-align:right;top:302.86px;font-size:16.4px;line-height:16.4px;font-weight:700;color:#fff;">7d</div>
<div class="t" style="left:143.20px;width:800px;text-align:right;top:302.86px;font-size:16.4px;line-height:16.4px;font-weight:700;color:#fff;">0%</div>
<div style="left:951px;top:297.24px;width:22px;height:29.620000000000005px;overflow:hidden"><div style="left:8px;top:3.3px;width:23.6px;height:23.6px;border-radius:50%;background:#84c86b"></div><div class="t" style="left:12.200000000000045px;top:8.77225px;font-size:13.5px;line-height:13.5px;font-weight:700;color:#fff">HI</div></div>
<div class="t" style="left:-714.00px;width:800px;text-align:right;top:335.74px;font-size:15.5px;line-height:15.5px;font-weight:400;color:#777;">5</div>
<div class="t" style="left:265.50px;top:332.98px;font-size:16.4px;line-height:16.4px;font-weight:400;color:#222;">Register business</div>
<div class="t" style="left:529.40px;top:332.98px;font-size:16.4px;line-height:16.4px;font-weight:400;color:#222;">09/05/25</div>
<div class="t" style="left:641.20px;top:332.98px;font-size:16.4px;line-height:16.4px;font-weight:400;color:#222;">09/09/25</div>
<div class="t" style="left:23.20px;width:800px;text-align:right;top:332.98px;font-size:16.4px;line-height:16.4px;font-weight:400;color:#222;">3d</div>
<div class="t" style="left:143.20px;width:800px;text-align:right;top:332.98px;font-size:16.4px;line-height:16.4px;font-weight:400;color:#222;">0%</div>
<div style="left:951px;top:327.86px;width:22px;height:29.620000000000005px;overflow:hidden"><div style="left:8px;top:3.3px;width:23.6px;height:23.6px;border-radius:50%;background:#a8413f"></div><div class="t" style="left:12.200000000000045px;top:8.77225px;font-size:13.5px;line-height:13.5px;font-weight:400;color:#fff">AI</div></div>
<div class="t" style="left:-714.00px;width:800px;text-align:right;top:366.36px;font-size:15.5px;line-height:15.5px;font-weight:400;color:#777;">6</div>
<div class="t" style="left:265.50px;top:363.60px;font-size:16.4px;line-height:16.4px;font-weight:400;color:#222;">Apply for licenses &amp; permits</div>
<div class="t" style="left:529.40px;top:363.60px;font-size:16.4px;line-height:16.4px;font-weight:400;color:#222;">09/04/25</div>
<div class="t" style="left:641.20px;top:363.60px;font-size:16.4px;line-height:16.4px;font-weight:400;color:#222;">09/12/25</div>
<div class="t" style="left:23.20px;width:800px;text-align:right;top:363.60px;font-size:16.4px;line-height:16.4px;font-weight:400;color:#222;">7d</div>
<div class="t" style="left:143.20px;width:800px;text-align:right;top:363.60px;font-size:16.4px;line-height:16.4px;font-weight:400;color:#222;">0%</div>
<div style="left:951px;top:358.48px;width:22px;height:29.620000000000005px;overflow:hidden"><div style="left:8px;top:3.3px;width:23.6px;height:23.6px;border-radius:50%;background:#6b7332"></div><div class="t" style="left:12.200000000000045px;top:8.77225px;font-size:13.5px;line-height:13.5px;font-weight:400;color:#fff">B</div></div>
<div style="left:216.00px;top:389.00px;width:1691.00px;height:30.00px;background:#6b0b8b"></div>
<div style="left:520.90px;top:389.00px;width:1.00px;height:30.00px;background:#c98fe0"></div>
<div style="left:632.80px;top:389.00px;width:1.00px;height:30.00px;background:#c98fe0"></div>
<div style="left:738.30px;top:389.00px;width:1.00px;height:30.00px;background:#c98fe0"></div>
<div style="left:829.70px;top:389.00px;width:1.00px;height:30.00px;background:#c98fe0"></div>
<div style="left:950.00px;top:389.00px;width:1.00px;height:30.00px;background:#c98fe0"></div>
<div style="left:216.00px;top:388.00px;width:1691.00px;height:1.00px;background:#eed8f4"></div>
<div style="left:216.00px;top:419.00px;width:1691.00px;height:1.00px;background:#eed8f4"></div>
<div class="t" style="left:-714.00px;width:800px;text-align:right;top:396.98px;font-size:15.5px;line-height:15.5px;font-weight:400;color:#777;">7</div>
<div style="left:226.70px;top:394.40px;width:14.20px;height:14.00px;background:#ececec;border-radius:2.5px"></div>
<div style="left:229.90px;top:400.30px;width:7.80px;height:2.50px;background:#333;border-radius:1.2px"></div>
<div class="t" style="left:248.00px;top:394.72px;font-size:16.4px;line-height:16.4px;font-weight:700;color:#fff;">Phase 3: Branding &amp; Marketing</div>
<div class="t" style="left:529.40px;top:394.72px;font-size:16.4px;line-height:16.4px;font-weight:700;color:#fff;">09/09/25</div>
<div class="t" style="left:641.20px;top:394.72px;font-size:16.4px;line-height:16.4px;font-weight:700;color:#fff;">09/18/25</div>
<div class="t" style="left:23.20px;width:800px;text-align:right;top:394.72px;font-size:16.4px;line-height:16.4px;font-weight:700;color:#fff;">8d</div>
<div class="t" style="left:143.20px;width:800px;text-align:right;top:394.72px;font-size:16.4px;line-height:16.4px;font-weight:700;color:#fff;">0%</div>
<div style="left:951px;top:389.1px;width:22px;height:29.620000000000005px;overflow:hidden"><div style="left:8px;top:3.3px;width:23.6px;height:23.6px;border-radius:50%;background:#a8413f"></div><div class="t" style="left:12.200000000000045px;top:8.77225px;font-size:13.5px;line-height:13.5px;font-weight:700;color:#fff">A</div></div>
<div class="t" style="left:-714.00px;width:800px;text-align:right;top:427.60px;font-size:15.5px;line-height:15.5px;font-weight:400;color:#777;">8</div>
<div class="t" style="left:265.50px;top:424.84px;font-size:16.4px;line-height:16.4px;font-weight:400;color:#222;">Create brand identity</div>
<div class="t" style="left:529.40px;top:424.84px;font-size:16.4px;line-height:16.4px;font-weight:400;color:#222;">09/09/25</div>
<div class="t" style="left:641.20px;top:424.84px;font-size:16.4px;line-height:16.4px;font-weight:400;color:#222;">09/12/25</div>
<div class="t" style="left:23.20px;width:800px;text-align:right;top:424.84px;font-size:16.4px;line-height:16.4px;font-weight:400;color:#222;">4d</div>
<div class="t" style="left:143.20px;width:800px;text-align:right;top:424.84px;font-size:16.4px;line-height:16.4px;font-weight:400;color:#222;">0%</div>
<div style="left:951px;top:419.72px;width:22px;height:42.77999999999997px;overflow:hidden"><div style="left:8px;top:3.3px;width:23.6px;height:23.6px;border-radius:50%;background:#6b7332"></div><div class="t" style="left:12.200000000000045px;top:8.77225px;font-size:13.5px;line-height:13.5px;font-weight:400;color:#fff">B</div></div>
<div class="t" style="left:-714.00px;width:800px;text-align:right;top:471.38px;font-size:15.5px;line-height:15.5px;font-weight:400;color:#777;">9</div>
<div class="t" style="left:265.50px;top:468.62px;font-size:16.4px;line-height:16.4px;font-weight:400;color:#222;">Build company website</div>
<div class="t" style="left:529.40px;top:468.62px;font-size:16.4px;line-height:16.4px;font-weight:400;color:#222;">09/15/25</div>
<div class="t" style="left:641.20px;top:468.62px;font-size:16.4px;line-height:16.4px;font-weight:400;color:#222;">09/17/25</div>
<div class="t" style="left:23.20px;width:800px;text-align:right;top:468.62px;font-size:16.4px;line-height:16.4px;font-weight:400;color:#222;">3d</div>
<div class="t" style="left:143.20px;width:800px;text-align:right;top:468.62px;font-size:16.4px;line-height:16.4px;font-weight:400;color:#222;">0%</div>
<div style="left:951px;top:463.5px;width:22px;height:29.620000000000005px;overflow:hidden"><div style="left:8px;top:3.3px;width:23.6px;height:23.6px;border-radius:50%;background:#3b78a6"></div><div class="t" style="left:12.200000000000045px;top:8.77225px;font-size:13.5px;line-height:13.5px;font-weight:400;color:#fff">LC</div></div>
<div class="t" style="left:-714.00px;width:800px;text-align:right;top:502.00px;font-size:15.5px;line-height:15.5px;font-weight:400;color:#777;">10</div>
<div class="t" style="left:265.50px;top:499.24px;font-size:16.4px;line-height:16.4px;font-weight:400;color:#222;">Social media setup</div>
<div class="t" style="left:529.40px;top:499.24px;font-size:16.4px;line-height:16.4px;font-weight:400;color:#222;">09/18/25</div>
<div class="t" style="left:641.20px;top:499.24px;font-size:16.4px;line-height:16.4px;font-weight:400;color:#222;">09/18/25</div>
<div class="t" style="left:23.20px;width:800px;text-align:right;top:499.24px;font-size:16.4px;line-height:16.4px;font-weight:400;color:#222;">1d</div>
<div style="left:216.00px;top:525.00px;width:1691.00px;height:29.00px;background:#6b0b8b"></div>
<div style="left:520.90px;top:525.00px;width:1.00px;height:29.00px;background:#c98fe0"></div>
<div style="left:632.80px;top:525.00px;width:1.00px;height:29.00px;background:#c98fe0"></div>
<div style="left:738.30px;top:525.00px;width:1.00px;height:29.00px;background:#c98fe0"></div>
<div style="left:829.70px;top:525.00px;width:1.00px;height:29.00px;background:#c98fe0"></div>
<div style="left:950.00px;top:525.00px;width:1.00px;height:29.00px;background:#c98fe0"></div>
<div style="left:216.00px;top:524.00px;width:1691.00px;height:1.00px;background:#eed8f4"></div>
<div style="left:216.00px;top:554.00px;width:1691.00px;height:1.00px;background:#eed8f4"></div>
<div class="t" style="left:-714.00px;width:800px;text-align:right;top:532.62px;font-size:15.5px;line-height:15.5px;font-weight:400;color:#777;">11</div>
<div style="left:226.70px;top:530.04px;width:14.20px;height:14.00px;background:#ececec;border-radius:2.5px"></div>
<div style="left:229.90px;top:535.94px;width:7.80px;height:2.50px;background:#333;border-radius:1.2px"></div>
<div class="t" style="left:248.00px;top:530.36px;font-size:16.4px;line-height:16.4px;font-weight:700;color:#fff;">Phase 4: Operations Setup</div>
<div class="t" style="left:529.40px;top:530.36px;font-size:16.4px;line-height:16.4px;font-weight:700;color:#fff;">09/23/25</div>
<div class="t" style="left:641.20px;top:530.36px;font-size:16.4px;line-height:16.4px;font-weight:700;color:#fff;">10/03/25</div>
<div class="t" style="left:23.20px;width:800px;text-align:right;top:530.36px;font-size:16.4px;line-height:16.4px;font-weight:700;color:#fff;">9d</div>
<div class="t" style="left:143.20px;width:800px;text-align:right;top:530.36px;font-size:16.4px;line-height:16.4px;font-weight:700;color:#fff;">0%</div>
<div style="left:951px;top:524.74px;width:22px;height:29.620000000000005px;overflow:hidden"><div style="left:8px;top:3.3px;width:23.6px;height:23.6px;border-radius:50%;background:#6b7332"></div><div class="t" style="left:12.200000000000045px;top:8.77225px;font-size:13.5px;line-height:13.5px;font-weight:700;color:#fff">B</div></div>
<div class="t" style="left:-714.00px;width:800px;text-align:right;top:563.24px;font-size:15.5px;line-height:15.5px;font-weight:400;color:#777;">12</div>
<div class="t" style="left:265.50px;top:560.48px;font-size:16.4px;line-height:16.4px;font-weight:400;color:#222;">Secure office/location</div>
<div class="t" style="left:529.40px;top:560.48px;font-size:16.4px;line-height:16.4px;font-weight:400;color:#222;">09/23/25</div>
<div class="t" style="left:641.20px;top:560.48px;font-size:16.4px;line-height:16.4px;font-weight:400;color:#222;">09/25/25</div>
<div class="t" style="left:23.20px;width:800px;text-align:right;top:560.48px;font-size:16.4px;line-height:16.4px;font-weight:400;color:#222;">3d</div>
<div class="t" style="left:143.20px;width:800px;text-align:right;top:560.48px;font-size:16.4px;line-height:16.4px;font-weight:400;color:#222;">0%</div>
<div style="left:951px;top:555.36px;width:22px;height:29.620000000000005px;overflow:hidden"><div style="left:8px;top:3.3px;width:23.6px;height:23.6px;border-radius:50%;background:#86c96c"></div><div class="t" style="left:12.200000000000045px;top:8.77225px;font-size:13.5px;line-height:13.5px;font-weight:400;color:#fff">R</div></div>
<div class="t" style="left:-714.00px;width:800px;text-align:right;top:593.86px;font-size:15.5px;line-height:15.5px;font-weight:400;color:#777;">13</div>
<div class="t" style="left:265.50px;top:591.10px;font-size:16.4px;line-height:16.4px;font-weight:400;color:#222;">Purchase equipment &amp; supplies</div>
<div class="t" style="left:529.40px;top:591.10px;font-size:16.4px;line-height:16.4px;font-weight:400;color:#222;">09/26/25</div>
<div class="t" style="left:641.20px;top:591.10px;font-size:16.4px;line-height:16.4px;font-weight:400;color:#222;">10/03/25</div>
<div class="t" style="left:23.20px;width:800px;text-align:right;top:591.10px;font-size:16.4px;line-height:16.4px;font-weight:400;color:#222;">6d</div>
<div class="t" style="left:143.20px;width:800px;text-align:right;top:591.10px;font-size:16.4px;line-height:16.4px;font-weight:400;color:#222;">0%</div>
<div style="left:951px;top:585.98px;width:22px;height:29.620000000000005px;overflow:hidden"><div style="left:8px;top:3.3px;width:23.6px;height:23.6px;border-radius:50%;background:#6b7332"></div><div class="t" style="left:12.200000000000045px;top:8.77225px;font-size:13.5px;line-height:13.5px;font-weight:400;color:#fff">B</div></div>
<div style="left:216.00px;top:617.00px;width:1691.00px;height:29.00px;background:#6b0b8b"></div>
<div style="left:520.90px;top:617.00px;width:1.00px;height:29.00px;background:#c98fe0"></div>
<div style="left:632.80px;top:617.00px;width:1.00px;height:29.00px;background:#c98fe0"></div>
<div style="left:738.30px;top:617.00px;width:1.00px;height:29.00px;background:#c98fe0"></div>
<div style="left:829.70px;top:617.00px;width:1.00px;height:29.00px;background:#c98fe0"></div>
<div style="left:950.00px;top:617.00px;width:1.00px;height:29.00px;background:#c98fe0"></div>
<div style="left:216.00px;top:616.00px;width:1691.00px;height:1.00px;background:#eed8f4"></div>
<div style="left:216.00px;top:646.00px;width:1691.00px;height:1.00px;background:#eed8f4"></div>
<div class="t" style="left:-714.00px;width:800px;text-align:right;top:624.48px;font-size:15.5px;line-height:15.5px;font-weight:400;color:#777;">14</div>
<div style="left:226.70px;top:621.90px;width:14.20px;height:14.00px;background:#ececec;border-radius:2.5px"></div>
<div style="left:229.90px;top:627.80px;width:7.80px;height:2.50px;background:#333;border-radius:1.2px"></div>
<div class="t" style="left:248.00px;top:622.22px;font-size:16.4px;line-height:16.4px;font-weight:700;color:#fff;">Phase 5: Product / Service Prep</div>
<div class="t" style="left:529.40px;top:622.22px;font-size:16.4px;line-height:16.4px;font-weight:700;color:#fff;">10/09/25</div>
<div class="t" style="left:641.20px;top:622.22px;font-size:16.4px;line-height:16.4px;font-weight:700;color:#fff;">10/15/25</div>
<div class="t" style="left:23.20px;width:800px;text-align:right;top:622.22px;font-size:16.4px;line-height:16.4px;font-weight:700;color:#fff;">5d</div>
<div style="left:951px;top:616.6px;width:22px;height:29.620000000000005px;overflow:hidden"><div style="left:8px;top:3.3px;width:23.6px;height:23.6px;border-radius:50%;background:#6b7332"></div><div class="t" style="left:12.200000000000045px;top:8.77225px;font-size:13.5px;line-height:13.5px;font-weight:700;color:#fff">B</div></div>
<div style="left:974.00px;top:647.00px;width:933.00px;height:30.00px;background:#fff"></div>
<div class="t" style="left:-714.00px;width:800px;text-align:right;top:655.10px;font-size:15.5px;line-height:15.5px;font-weight:400;color:#777;">15</div>
<div class="t" style="left:265.50px;top:652.34px;font-size:16.4px;line-height:16.4px;font-weight:400;color:#222;">Finalize product/service</div>
<div class="t" style="left:529.40px;top:652.34px;font-size:16.4px;line-height:16.4px;font-weight:400;color:#222;">10/09/25</div>
<div class="t" style="left:641.20px;top:652.34px;font-size:16.4px;line-height:16.4px;font-weight:400;color:#222;">10/13/25</div>
<div class="t" style="left:23.20px;width:800px;text-align:right;top:652.34px;font-size:16.4px;line-height:16.4px;font-weight:400;color:#222;">3d</div>
<div class="t" style="left:-714.00px;width:800px;text-align:right;top:685.72px;font-size:15.5px;line-height:15.5px;font-weight:400;color:#777;">16</div>
<div class="t" style="left:265.50px;top:682.96px;font-size:16.4px;line-height:16.4px;font-weight:400;color:#222;">Conduct pilot testing</div>
<div class="t" style="left:529.40px;top:682.96px;font-size:16.4px;line-height:16.4px;font-weight:400;color:#222;">10/13/25</div>
<div class="t" style="left:641.20px;top:682.96px;font-size:16.4px;line-height:16.4px;font-weight:400;color:#222;">10/15/25</div>
<div class="t" style="left:23.20px;width:800px;text-align:right;top:682.96px;font-size:16.4px;line-height:16.4px;font-weight:400;color:#222;">3d</div>
<div style="left:216.00px;top:708.00px;width:1691.00px;height:30.00px;background:#6b0b8b"></div>
<div style="left:520.90px;top:708.00px;width:1.00px;height:30.00px;background:#c98fe0"></div>
<div style="left:632.80px;top:708.00px;width:1.00px;height:30.00px;background:#c98fe0"></div>
<div style="left:738.30px;top:708.00px;width:1.00px;height:30.00px;background:#c98fe0"></div>
<div style="left:829.70px;top:708.00px;width:1.00px;height:30.00px;background:#c98fe0"></div>
<div style="left:950.00px;top:708.00px;width:1.00px;height:30.00px;background:#c98fe0"></div>
<div style="left:216.00px;top:707.00px;width:1691.00px;height:1.00px;background:#eed8f4"></div>
<div style="left:216.00px;top:738.00px;width:1691.00px;height:1.00px;background:#eed8f4"></div>
<div class="t" style="left:-714.00px;width:800px;text-align:right;top:716.34px;font-size:15.5px;line-height:15.5px;font-weight:400;color:#777;">17</div>
<div style="left:226.70px;top:713.76px;width:14.20px;height:14.00px;background:#ececec;border-radius:2.5px"></div>
<div style="left:229.90px;top:719.66px;width:7.80px;height:2.50px;background:#333;border-radius:1.2px"></div>
<div class="t" style="left:248.00px;top:714.08px;font-size:16.4px;line-height:16.4px;font-weight:700;color:#fff;">Phase 6: Marketing Launch Prep</div>
<div class="t" style="left:529.40px;top:714.08px;font-size:16.4px;line-height:16.4px;font-weight:700;color:#fff;">10/16/25</div>
<div class="t" style="left:641.20px;top:714.08px;font-size:16.4px;line-height:16.4px;font-weight:700;color:#fff;">10/24/25</div>
<div class="t" style="left:23.20px;width:800px;text-align:right;top:714.08px;font-size:16.4px;line-height:16.4px;font-weight:700;color:#fff;">7d</div>
<div style="left:951px;top:708.46px;width:22px;height:29.61999999999989px;overflow:hidden"><div style="left:8px;top:3.3px;width:23.6px;height:23.6px;border-radius:50%;background:#a8413f"></div><div class="t" style="left:12.200000000000045px;top:8.77225px;font-size:13.5px;line-height:13.5px;font-weight:700;color:#fff">A</div></div>
<div class="t" style="left:-714.00px;width:800px;text-align:right;top:746.96px;font-size:15.5px;line-height:15.5px;font-weight:400;color:#777;">18</div>
<div class="t" style="left:265.50px;top:744.20px;font-size:16.4px;line-height:16.4px;font-weight:400;color:#222;">Create launch campaign</div>
<div class="t" style="left:529.40px;top:744.20px;font-size:16.4px;line-height:16.4px;font-weight:400;color:#222;">10/16/25</div>
<div class="t" style="left:641.20px;top:744.20px;font-size:16.4px;line-height:16.4px;font-weight:400;color:#222;">10/22/25</div>
<div class="t" style="left:23.20px;width:800px;text-align:right;top:744.20px;font-size:16.4px;line-height:16.4px;font-weight:400;color:#222;">5d</div>
<div class="t" style="left:-714.00px;width:800px;text-align:right;top:777.58px;font-size:15.5px;line-height:15.5px;font-weight:400;color:#777;">19</div>
<div class="t" style="left:265.50px;top:774.82px;font-size:16.4px;line-height:16.4px;font-weight:400;color:#222;">Press release &amp; PR outreach</div>
<div class="t" style="left:529.40px;top:774.82px;font-size:16.4px;line-height:16.4px;font-weight:400;color:#222;">10/23/25</div>
<div class="t" style="left:641.20px;top:774.82px;font-size:16.4px;line-height:16.4px;font-weight:400;color:#222;">10/24/25</div>
<div class="t" style="left:23.20px;width:800px;text-align:right;top:774.82px;font-size:16.4px;line-height:16.4px;font-weight:400;color:#222;">2d</div>
<div style="left:216.00px;top:800.00px;width:1691.00px;height:30.00px;background:#6b0b8b"></div>
<div style="left:520.90px;top:800.00px;width:1.00px;height:30.00px;background:#c98fe0"></div>
<div style="left:632.80px;top:800.00px;width:1.00px;height:30.00px;background:#c98fe0"></div>
<div style="left:738.30px;top:800.00px;width:1.00px;height:30.00px;background:#c98fe0"></div>
<div style="left:829.70px;top:800.00px;width:1.00px;height:30.00px;background:#c98fe0"></div>
<div style="left:950.00px;top:800.00px;width:1.00px;height:30.00px;background:#c98fe0"></div>
<div style="left:216.00px;top:799.00px;width:1691.00px;height:1.00px;background:#eed8f4"></div>
<div style="left:216.00px;top:830.00px;width:1691.00px;height:1.00px;background:#eed8f4"></div>
<div class="t" style="left:-714.00px;width:800px;text-align:right;top:808.20px;font-size:15.5px;line-height:15.5px;font-weight:400;color:#777;">20</div>
<div style="left:226.70px;top:805.62px;width:14.20px;height:14.00px;background:#ececec;border-radius:2.5px"></div>
<div style="left:229.90px;top:811.52px;width:7.80px;height:2.50px;background:#333;border-radius:1.2px"></div>
<div class="t" style="left:248.00px;top:805.94px;font-size:16.4px;line-height:16.4px;font-weight:700;color:#fff;">Phase 7: Final Readiness</div>
<div class="t" style="left:529.40px;top:805.94px;font-size:16.4px;line-height:16.4px;font-weight:700;color:#fff;">10/27/25</div>
<div class="t" style="left:641.20px;top:805.94px;font-size:16.4px;line-height:16.4px;font-weight:700;color:#fff;">10/30/25</div>
<div class="t" style="left:23.20px;width:800px;text-align:right;top:805.94px;font-size:16.4px;line-height:16.4px;font-weight:700;color:#fff;">4d</div>
<div style="left:951px;top:800.3199999999999px;width:22px;height:29.62000000000012px;overflow:hidden"><div style="left:8px;top:3.3px;width:23.6px;height:23.6px;border-radius:50%;background:#3b78a6"></div><div class="t" style="left:12.200000000000045px;top:8.77225px;font-size:13.5px;line-height:13.5px;font-weight:700;color:#fff">LC</div></div>
<div class="t" style="left:-714.00px;width:800px;text-align:right;top:838.82px;font-size:15.5px;line-height:15.5px;font-weight:400;color:#777;">21</div>
<div class="t" style="left:265.50px;top:836.06px;font-size:16.4px;line-height:16.4px;font-weight:400;color:#222;">Staff training</div>
<div class="t" style="left:529.40px;top:836.06px;font-size:16.4px;line-height:16.4px;font-weight:400;color:#222;">10/27/25</div>
<div class="t" style="left:641.20px;top:836.06px;font-size:16.4px;line-height:16.4px;font-weight:400;color:#222;">10/28/25</div>
<div class="t" style="left:23.20px;width:800px;text-align:right;top:836.06px;font-size:16.4px;line-height:16.4px;font-weight:400;color:#222;">2d</div>
<div class="t" style="left:-714.00px;width:800px;text-align:right;top:869.44px;font-size:15.5px;line-height:15.5px;font-weight:400;color:#777;">22</div>
<div class="t" style="left:265.50px;top:866.68px;font-size:16.4px;line-height:16.4px;font-weight:400;color:#222;">Soft launch (trial run)</div>
<div class="t" style="left:529.40px;top:866.68px;font-size:16.4px;line-height:16.4px;font-weight:400;color:#222;">10/29/25</div>
<div class="t" style="left:641.20px;top:866.68px;font-size:16.4px;line-height:16.4px;font-weight:400;color:#222;">10/30/25</div>
<div class="t" style="left:23.20px;width:800px;text-align:right;top:866.68px;font-size:16.4px;line-height:16.4px;font-weight:400;color:#222;">2d</div>
<div style="left:216.00px;top:892.00px;width:1691.00px;height:30.00px;background:#2a7e36"></div>
<div style="left:520.90px;top:892.00px;width:1.00px;height:30.00px;background:#8fd09a"></div>
<div style="left:632.80px;top:892.00px;width:1.00px;height:30.00px;background:#8fd09a"></div>
<div style="left:738.30px;top:892.00px;width:1.00px;height:30.00px;background:#8fd09a"></div>
<div style="left:829.70px;top:892.00px;width:1.00px;height:30.00px;background:#8fd09a"></div>
<div style="left:950.00px;top:892.00px;width:1.00px;height:30.00px;background:#8fd09a"></div>
<div style="left:216.00px;top:891.00px;width:1691.00px;height:1.00px;background:#cfe8d2"></div>
<div style="left:216.00px;top:922.00px;width:1691.00px;height:1.00px;background:#cfe8d2"></div>
<div class="t" style="left:-714.00px;width:800px;text-align:right;top:900.06px;font-size:15.5px;line-height:15.5px;font-weight:400;color:#777;">23</div>
<div style="left:226.70px;top:897.48px;width:14.20px;height:14.00px;background:#ececec;border-radius:2.5px"></div>
<div style="left:229.90px;top:903.38px;width:7.80px;height:2.50px;background:#333;border-radius:1.2px"></div>
<div class="t" style="left:248.00px;top:897.80px;font-size:16.4px;line-height:16.4px;font-weight:700;color:#fff;">Phase 8: Official Launch</div>
<div class="t" style="left:529.40px;top:897.80px;font-size:16.4px;line-height:16.4px;font-weight:700;color:#fff;">10/30/25</div>
<div class="t" style="left:641.20px;top:897.80px;font-size:16.4px;line-height:16.4px;font-weight:700;color:#fff;">10/30/25</div>
<div class="t" style="left:23.20px;width:800px;text-align:right;top:897.80px;font-size:16.4px;line-height:16.4px;font-weight:700;color:#fff;">0</div>
<div style="left:951px;top:892.1800000000001px;width:22px;height:29.61999999999989px;overflow:hidden"><div class="t" style="left:10.5px;top:8.77225px;font-size:13.5px;line-height:13.5px;font-weight:700;color:#fff">AI</div></div>
<div style="left:974.00px;top:923.00px;width:933.00px;height:29.00px;background:#fff"></div>
<div style="left:216.50px;top:923.00px;width:756.00px;height:29.00px;background:#e7f4e8"></div>
<div style="left:974.00px;top:923.00px;width:933.00px;height:29.00px;background:#fff"></div>
<div class="t" style="left:-714.00px;width:800px;text-align:right;top:930.68px;font-size:15.5px;line-height:15.5px;font-weight:400;color:#777;">24</div>
<div class="t" style="left:265.50px;top:927.92px;font-size:16.4px;line-height:16.4px;font-weight:400;color:#222;">Grand opening / go-live</div>
<div class="t" style="left:529.40px;top:927.92px;font-size:16.4px;line-height:16.4px;font-weight:400;color:#222;">10/30/25</div>
<div class="t" style="left:641.20px;top:927.92px;font-size:16.4px;line-height:16.4px;font-weight:400;color:#222;">10/30/25</div>
<div class="t" style="left:23.20px;width:800px;text-align:right;top:927.92px;font-size:16.4px;line-height:16.4px;font-weight:400;color:#222;">0</div>
<div class="t" style="left:-714.00px;width:800px;text-align:right;top:961.30px;font-size:15.5px;line-height:15.5px;font-weight:400;color:#777;">25</div>
<div class="t" style="left:-714.00px;width:800px;text-align:right;top:1050.18px;font-size:15.5px;line-height:15.5px;font-weight:400;color:#777;">26</div>
<div class="t" style="left:-714.00px;width:800px;text-align:right;top:1080.78px;font-size:15.5px;line-height:15.5px;font-weight:400;color:#777;">27</div>
<div class="t" style="left:-714.00px;width:800px;text-align:right;top:1111.40px;font-size:15.5px;line-height:15.5px;font-weight:400;color:#777;">28</div>
<div class="t" style="left:-714.00px;width:800px;text-align:right;top:1142.02px;font-size:15.5px;line-height:15.5px;font-weight:400;color:#777;">29</div>
<div class="t" style="left:-714.00px;width:800px;text-align:right;top:1172.64px;font-size:15.5px;line-height:15.5px;font-weight:400;color:#777;">30</div>
<div class="t" style="left:-714.00px;width:800px;text-align:right;top:1203.26px;font-size:15.5px;line-height:15.5px;font-weight:400;color:#777;">31</div>
<div class="t" style="left:-714.00px;width:800px;text-align:right;top:1233.88px;font-size:15.5px;line-height:15.5px;font-weight:400;color:#777;">32</div>
<div class="t" style="left:-714.00px;width:800px;text-align:right;top:1264.50px;font-size:15.5px;line-height:15.5px;font-weight:400;color:#777;">33</div>
<div class="t" style="left:-714.00px;width:800px;text-align:right;top:1295.12px;font-size:15.5px;line-height:15.5px;font-weight:400;color:#777;">34</div>
<div class="t" style="left:-714.00px;width:800px;text-align:right;top:1325.74px;font-size:15.5px;line-height:15.5px;font-weight:400;color:#777;">35</div>
<div class="t" style="left:-714.00px;width:800px;text-align:right;top:1356.36px;font-size:15.5px;line-height:15.5px;font-weight:400;color:#777;">36</div>
<div class="t" style="left:-714.00px;width:800px;text-align:right;top:1386.98px;font-size:15.5px;line-height:15.5px;font-weight:400;color:#777;">37</div>
<svg style="position:absolute;left:0;top:0" width="300" height="270"><path d="M125.2 246.5 V252.8 A2.1 2.1 0 0 0 129.4 252.8 V246.2 A3.9 3.9 0 0 0 121.6 246.2 V253 A5.7 5.7 0 0 0 133 253 V245.5" fill="none" stroke="#3f6191" stroke-width="1.4"/><path d="M145.4 244.6 H158.5 V254.7 H151.6 L149.4 258.8 L148.2 254.7 H145.4 Z" fill="#d3e6fa" stroke="#3f6191" stroke-width="1.3" stroke-linejoin="round"/><path d="M148.5 249 H155.5 M148.5 251.8 H153.5" stroke="#a9c4e6" stroke-width="0.9"/></svg>
<div class="t" style="left:247.50px;top:958.10px;font-size:16.3px;line-height:16.3px;font-weight:700;color:#3264aa;">*Display the project's critical path</div>
<div class="t" style="left:247.50px;top:977.55px;font-size:16.3px;line-height:16.3px;font-weight:700;color:#3264aa;">in Gantt view; the critical path</div>
<div class="t" style="left:247.50px;top:997.00px;font-size:16.3px;line-height:16.3px;font-weight:700;color:#3264aa;">updates automatically as</div>
<div class="t" style="left:247.50px;top:1016.45px;font-size:16.3px;line-height:16.3px;font-weight:700;color:#3264aa;">changes are made.</div>
<div style="left:951px;top:953.4200000000001px;width:22px;height:88px;overflow:hidden">
<div class="t" style="left:8.20px;top:4.68px;font-size:16.3px;line-height:16.3px;font-weight:700;color:#3264aa;">*C</div>
<div class="t" style="left:8.20px;top:24.13px;font-size:16.3px;line-height:16.3px;font-weight:700;color:#3264aa;">fo</div>
<div class="t" style="left:8.20px;top:43.58px;font-size:16.3px;line-height:16.3px;font-weight:700;color:#3264aa;">co</div>
</div>
<div class="t" style="left:247.50px;top:1047.00px;font-size:16.3px;line-height:16.3px;font-weight:700;color:#2a2aae;text-decoration:underline">Learn More</div>
<div style="left:974.0px;top:0;width:933.0px;height:1440px;overflow:hidden">
<svg style="position:absolute;left:-974.0px;top:0" width="1920" height="1440"><path d="M1029.27 212.0 H1109.65 V232.0 L1102.15 224.0 H1036.77 L1029.27 232.0 Z" fill="#e4e4e4" stroke="#eadcf0" stroke-width="1"/><rect x="1030.27" y="214.2" width="78.38000000000011" height="8.3" fill="#ececec" stroke="#a8a8a8" stroke-width="1"/><path d="M1083.19 303.74 H1325.33 V324.14 L1317.83 315.94 H1090.69 L1083.19 324.14 Z" fill="#cfcfcf" stroke="#e8d8ee" stroke-width="1"/><path d="M1217.99 395.6 H1487.0900000000001 V416.0 L1479.5900000000001 407.8 H1225.49 L1217.99 416.0 Z" fill="#cfcfcf" stroke="#e8d8ee" stroke-width="1"/><path d="M1595.43 531.24 H1891.49 V551.64 L1883.99 543.44 H1602.93 L1595.43 551.64 Z" fill="#cfcfcf" stroke="#e8d8ee" stroke-width="1"/><rect x="1029.27" y="242.6" width="53.42000000000007" height="16.2" fill="#cde9cf" stroke="#a8a8a8" stroke-width="1"/><rect x="1030.27" y="245.8" width="51.42000000000007" height="9.5" fill="#e2f7e2" stroke="#a6d6a8" stroke-width="1.2"/><path d="M1109.15 273.92 L1115.5500000000002 282.22 L1109.15 290.52000000000004 L1102.75 282.22 Z" fill="#5a5a5a" stroke="#5a5a5a" stroke-width="0.8" stroke-linejoin="round"/><rect x="1110.15" y="334.46000000000004" width="134.29999999999995" height="16.2" fill="#c9e3f8" stroke="#a9a9a9" stroke-width="1"/><rect x="1083.19" y="365.08000000000004" width="242.13999999999987" height="16.2" fill="#c8e6c9" stroke="#a5a5a5" stroke-width="1"/><rect x="1217.99" y="426.32000000000005" width="107.33999999999992" height="16.2" fill="#c8e6c9" stroke="#a5a5a5" stroke-width="1"/><rect x="1379.75" y="470.1" width="80.38000000000011" height="16.2" fill="#c8e6c9" stroke="#a5a5a5" stroke-width="1"/><rect x="1460.63" y="500.72" width="26.460000000000036" height="16.2" fill="#c8e6c9" stroke="#a5a5a5" stroke-width="1"/><rect x="1595.43" y="561.96" width="80.37999999999988" height="16.2" fill="#c8e6c9" stroke="#a5a5a5" stroke-width="1"/><rect x="1676.31" y="592.58" width="215.18000000000006" height="16.2" fill="#c8e6c9" stroke="#a5a5a5" stroke-width="1"/><path d="M1113.3 287.62 H1117.8 V294.02 H1114.4 V328.86" fill="none" stroke="#555" stroke-width="1.3"/><path d="M1110.9 323.86 H1117.9 L1114.4 331.86 Z" fill="#555"/><path d="M1325.33 440.72 H1464.6 V496.12" fill="none" stroke="#555" stroke-width="1.3"/><path d="M1460.13 485.0 H1464.6" fill="none" stroke="#555" stroke-width="1.3"/><path d="M1461.1 491.12 H1468.1 L1464.6 499.12 Z" fill="#555"/><path d="M1675.81 577.86 H1681.5 V583.98" fill="none" stroke="#555" stroke-width="1.3"/><path d="M1677 579.98 H1684 L1680.5 587.98 Z" fill="#555"/></svg>
</div>
<div style="left:974.0px;top:0;width:933.0px;height:1440px;overflow:hidden">
<div class="t" style="left:114.50px;top:242.02px;font-size:13.8px;line-height:13.8px;font-weight:400;color:#3e3e3e;">Finalize business plan</div>
<div class="t" style="left:146.50px;top:272.64px;font-size:13.8px;line-height:13.8px;font-weight:400;color:#3e3e3e;">Secure funding</div>
<div class="t" style="left:276.50px;top:333.88px;font-size:13.8px;line-height:13.8px;font-weight:400;color:#3e3e3e;">Register business</div>
<div class="t" style="left:357.50px;top:364.50px;font-size:13.8px;line-height:13.8px;font-weight:400;color:#3e3e3e;">Apply for licenses &amp; permits</div>
<div class="t" style="left:357.50px;top:425.74px;font-size:13.8px;line-height:13.8px;font-weight:400;color:#3e3e3e;">Create brand identity</div>
<div class="t" style="left:492.50px;top:469.52px;font-size:13.8px;line-height:13.8px;font-weight:400;color:#3e3e3e;">Build company website</div>
<div class="t" style="left:519.50px;top:500.14px;font-size:13.8px;line-height:13.8px;font-weight:400;color:#3e3e3e;">Social media setup</div>
<div class="t" style="left:708.50px;top:561.38px;font-size:13.8px;line-height:13.8px;font-weight:400;color:#3e3e3e;">Secure office/location</div>
<div class="t" style="left:923.50px;top:592.00px;font-size:13.8px;line-height:13.8px;font-weight:400;color:#3e3e3e;">Purchase equipment &amp; supplies</div>
<div class="t" style="left:142.00px;top:211.27px;font-size:13.5px;line-height:13.5px;font-weight:400;color:#5f2a72;">Phase 1: Business Planning</div>
<div class="t" style="left:358.00px;top:303.51px;font-size:13.5px;line-height:13.5px;font-weight:400;color:#5f2a72;">Phase 2: Legal &amp; Compliance</div>
<div class="t" style="left:520.00px;top:395.37px;font-size:13.5px;line-height:13.5px;font-weight:400;color:#5f2a72;">Phase 3: Branding &amp; Marketing</div>
<div class="t" style="left:925.00px;top:531.01px;font-size:13.5px;line-height:13.5px;font-weight:400;color:#5f2a72;">Phase 4: Operations Setup</div>
</div>
<div style="left:973.00px;top:136.00px;width:2.00px;height:1271.00px;background:#a3a3a3"></div>
<div style="left:975.00px;top:136.00px;width:1.00px;height:1271.00px;background:rgba(0,0,0,0.05)"></div>
<div style="left:973.00px;top:205.00px;width:2.00px;height:30.00px;background:rgba(255,255,255,0.45)"></div>
<div style="left:973.00px;top:297.00px;width:2.00px;height:30.00px;background:rgba(255,255,255,0.45)"></div>
<div style="left:973.00px;top:389.00px;width:2.00px;height:30.00px;background:rgba(255,255,255,0.45)"></div>
<div style="left:973.00px;top:525.00px;width:2.00px;height:29.00px;background:rgba(255,255,255,0.45)"></div>
<div style="left:973.00px;top:617.00px;width:2.00px;height:29.00px;background:rgba(255,255,255,0.45)"></div>
<div style="left:973.00px;top:708.00px;width:2.00px;height:30.00px;background:rgba(255,255,255,0.45)"></div>
<div style="left:973.00px;top:800.00px;width:2.00px;height:30.00px;background:rgba(255,255,255,0.45)"></div>
<div style="left:973.00px;top:892.00px;width:2.00px;height:30.00px;background:rgba(255,255,255,0.45)"></div>
<div style="left:36.00px;top:203.00px;width:180.00px;height:2.00px;background:#4b5a78"></div>
<div style="left:216.00px;top:203.00px;width:1691.00px;height:2.00px;background:#5a4c98"></div>
<svg style="position:absolute;left:1906.00px;top:189.00px;" width="6" height="12" viewBox="0 0 6 12"><path d="M2 1.5 Q4.8 4.5 4.8 6 Q4.8 7.5 2 10.5" fill="none" stroke="#333" stroke-width="1.7"/></svg>
<div style="left:1907.00px;top:202.50px;width:5.00px;height:2.50px;background:#333"></div>
</body></html>
